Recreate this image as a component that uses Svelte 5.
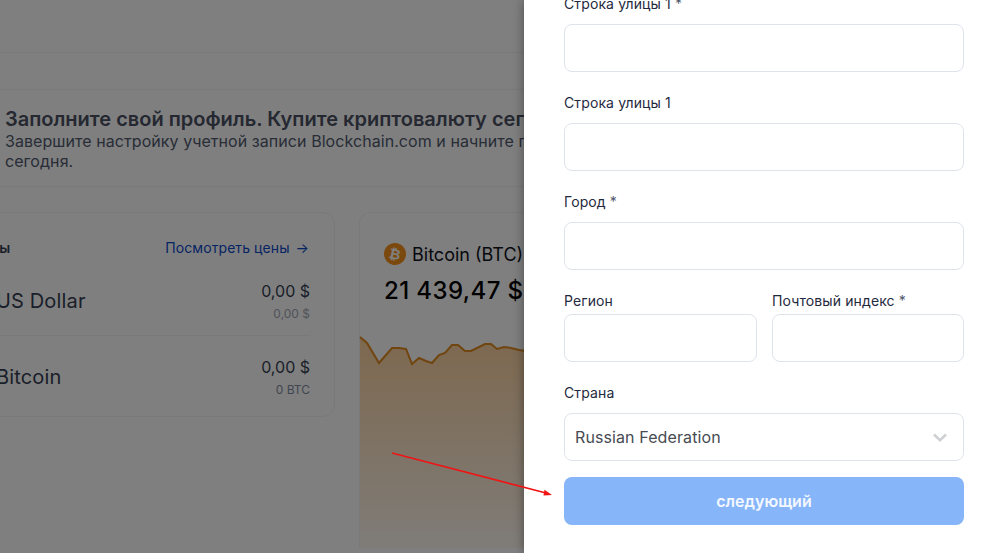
<script>
  const points = "360,337 367,343 379,363 392,348 399,348 406,349 412,364 419,358 426,361 432,363 439,355 445,353 452,345 458,345 465,351 471,351 485,344 491,344 497,349 504,347 511,348 519,350 526,351";
</script>

<div class="root">
  <div class="page">
    <div class="band first"></div>
    <div class="band second"></div>
    <section class="banner">
      <h1>Заполните свой профиль. Купите криптовалюту сегодня</h1>
      <p>Завершите настройку учетной записи Blockchain.com и начните покупать криптовалюту сегодня.</p>
    </section>
    <div class="cards">
      <div class="card balances">
        <div class="card-head">
          <span class="title">Цены</span>
          <span class="link">Посмотреть цены <span class="arr">→</span></span>
        </div>
        <div class="row">
          <span class="name">US Dollar</span>
          <div class="amount"><span class="val">0,00 $</span><span class="sub light">0,00 $</span></div>
        </div>
        <div class="row last">
          <span class="name">Bitcoin</span>
          <div class="amount"><span class="val">0,00 $</span><span class="sub">0 BTC</span></div>
        </div>
      </div>
      <div class="card price">
        <div class="coin">
          <span class="btc">₿</span>
          <span class="coin-name">Bitcoin (BTC)</span>
        </div>
        <div class="quote">21 439,47 $</div>
      </div>
    </div>
    <svg class="chart" width="524" height="553" viewBox="0 0 524 553" aria-hidden="true">
      <defs>
        <linearGradient id="area" x1="0" y1="0" x2="0" y2="1">
          <stop offset="0" stop-color="#f7931a" stop-opacity="0.42" />
          <stop offset="1" stop-color="#f7931a" stop-opacity="0.06" />
        </linearGradient>
      </defs>
      <polygon points="{points} 526,548 360,548" fill="url(#area)" />
      <polyline {points} fill="none" stroke="#e08a1e" stroke-width="2" />
    </svg>
    <div class="scrim"></div>
  </div>

  <aside class="panel">
    <div class="field first-field">
      <label for="a1">Строка улицы 1 <span class="req">*</span></label>
      <input id="a1" />
    </div>
    <div class="field">
      <label for="a2">Строка улицы 1</label>
      <input id="a2" />
    </div>
    <div class="field">
      <label for="a3">Город <span class="req">*</span></label>
      <input id="a3" />
    </div>
    <div class="pair">
      <div class="field tight">
        <label for="a4">Регион</label>
        <input id="a4" />
      </div>
      <div class="field tight">
        <label for="a5">Почтовый индекс <span class="req">*</span></label>
        <input id="a5" />
      </div>
    </div>
    <div class="field">
      <label for="a6">Страна</label>
      <div class="select" id="a6">
        <span>Russian Federation</span>
        <svg width="14" height="9" viewBox="0 0 14 9" aria-hidden="true">
          <path d="M1 1.5 7 7.2l6-5.7" fill="none" stroke="#cfd0d3" stroke-width="2.6" />
        </svg>
      </div>
    </div>
    <button class="next" type="button">следующий</button>
  </aside>

  <svg class="arrow" width="998" height="553" viewBox="0 0 998 553" aria-hidden="true">
    <line x1="392" y1="453" x2="546" y2="493" stroke="#f01414" stroke-width="1.5" />
    <polygon points="552,495 544.5,489.8 543.5,495.5" fill="#f01414" />
  </svg>
</div>

<style>
  :global(body) {
    margin: 0;
    background: #fff;
  }
  .root {
    position: relative;
    display: flex;
    width: 998px;
    height: 553px;
    overflow: hidden;
    font-family: Inter, "Noto Sans", sans-serif;
    color: #353f52;
  }
  .page {
    position: relative;
    flex: 0 0 524px;
    height: 553px;
    overflow: hidden;
    background: #fff;
  }
  .band {
    border-bottom: 1px solid #f0f2f7;
  }
  .band.first {
    height: 52px;
  }
  .band.second {
    height: 36px;
  }
  .banner {
    width: 560px;
    height: 97px;
    box-sizing: border-box;
    padding: 17px 0 0 5px;
    border-bottom: 1px solid #f0f2f7;
    white-space: nowrap;
  }
  h1 {
    margin: 0;
    font-size: 20px;
    font-weight: 600;
    line-height: 24px;
    color: #4a5163;
  }
  .banner p {
    margin: 0;
    width: 730px;
    white-space: normal;
    font-size: 16px;
    font-weight: 400;
    line-height: 20px;
    letter-spacing: 0.06px;
    color: #505a6e;
  }
  .cards {
    display: flex;
    gap: 24px;
    margin: 25px 0 0 -52px;
    align-items: flex-start;
    width: 800px;
  }
  .card {
    box-sizing: border-box;
    border: 1px solid #f0f2f7;
    border-radius: 12px;
  }
  .balances {
    flex: 0 0 387px;
    height: 205px;
    padding: 0 24px 0 23px;
  }
  .card-head {
    display: flex;
    justify-content: space-between;
    align-items: flex-start;
    height: 54px;
    box-sizing: border-box;
    padding: 26px 1px 0 0;
    line-height: 17px;
  }
  .title {
    font-size: 14px;
    font-weight: 600;
    color: #353f52;
  }
  .link {
    font-size: 14px;
    font-weight: 400;
    letter-spacing: 0.08px;
    color: #0c48c8;
  }
  .arr {
    margin-left: 2px;
  }
  .row {
    display: flex;
    justify-content: space-between;
    align-items: center;
    height: 67px;
    padding-bottom: 1px;
    margin-bottom: 7px;
    border-bottom: 1px solid #f0f2f7;
  }
  .row.last {
    border-bottom: 0;
    margin-bottom: 0;
  }
  .name {
    padding-left: 24px;
    font-size: 20px;
    font-weight: 400;
    letter-spacing: 0.15px;
    color: #353f52;
  }
  .amount {
    display: flex;
    flex-direction: column;
    align-items: flex-end;
    gap: 5px;
  }
  .val {
    font-size: 16px;
    font-weight: 400;
    line-height: 20px;
    color: #353f52;
  }
  .sub {
    font-size: 12px;
    font-weight: 400;
    line-height: 15px;
    color: #828b9e;
  }
  .sub.light {
    color: #a0a6b4;
  }
  .price {
    flex: 0 0 300px;
    height: 336px;
    padding: 28px 24px;
    border-bottom: 0;
    border-radius: 12px 12px 0 0;
  }
  .coin {
    display: flex;
    align-items: center;
    gap: 6px;
    height: 26px;
    white-space: nowrap;
  }
  .btc {
    display: flex;
    align-items: center;
    justify-content: center;
    flex: 0 0 22px;
    height: 22px;
    border-radius: 50%;
    background: #f7931a;
    color: #fff;
    font-size: 14px;
    font-weight: 700;
    font-family: "DejaVu Sans", sans-serif;
    transform: rotate(12deg);
  }
  .coin-name {
    font-size: 18px;
    font-weight: 400;
    color: #0e121b;
  }
  .quote {
    margin-top: 9px;
    font-size: 24px;
    font-weight: 500;
    line-height: 30px;
    letter-spacing: 0.4px;
    color: #000;
    white-space: nowrap;
  }
  .chart {
    position: absolute;
    inset: 0;
  }
  .scrim {
    position: absolute;
    inset: 0;
    background: rgba(0, 0, 0, 0.5);
  }
  .panel {
    position: relative;
    flex: 0 0 474px;
    box-sizing: border-box;
    height: 553px;
    padding: 0 34px 0 40px;
    background: #fff;
    box-shadow: 0 0 10px rgba(0, 0, 0, 0.4);
  }
  .field {
    display: flex;
    flex-direction: column;
    margin-top: 21px;
  }
  .first-field {
    margin-top: -6px;
  }
  label {
    height: 20px;
    margin-bottom: 10px;
    font-size: 14px;
    font-weight: 400;
    line-height: 20px;
    letter-spacing: 0.12px;
    color: #1f2a40;
  }
  .req {
    color: #505a6e;
  }
  input,
  .select {
    display: block;
    box-sizing: border-box;
    width: 100%;
    height: 48px;
    border: 1px solid #dfe3eb;
    border-radius: 8px;
    background: #fff;
  }
  .pair {
    display: grid;
    grid-template-columns: 193px 192px;
    gap: 15px;
  }
  .tight label {
    margin-bottom: 3px;
  }
  .select {
    display: flex;
    align-items: center;
    justify-content: space-between;
    padding: 0 16px 0 10px;
    font-size: 16px;
    font-weight: 400;
    letter-spacing: 0.1px;
    color: #474b52;
  }
  .next {
    display: block;
    width: 100%;
    height: 48px;
    margin-top: 16px;
    border: 0;
    border-radius: 8px;
    background: #86b5f9;
    color: #f4f8ff;
    font-family: inherit;
    font-size: 16px;
    font-weight: 600;
  }
  .arrow {
    position: absolute;
    inset: 0;
    pointer-events: none;
  }
</style>
